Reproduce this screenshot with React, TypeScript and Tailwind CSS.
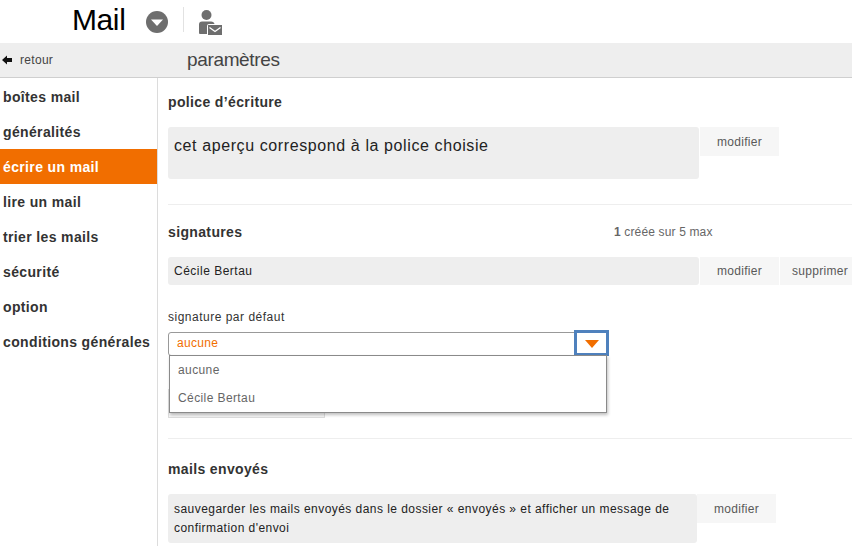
const sections = [
  'boîtes mail',
  'généralités',
  'écrire un mail',
  'lire un mail',
  'trier les mails',
  'sécurité',
  'option',
  'conditions générales',
];

function ActionButton({ label, className = '' }: { label: string; className?: string }) {
  return (
    <button className={`shrink-0 bg-[#f6f6f6] text-[12px] tracking-[0.3px] text-[#595959] ${className}`}>
      {label}
    </button>
  );
}

function Sidebar() {
  return (
    <nav className="w-[158px] shrink-0 border-r border-[#dcdcdc] pt-[1px]">
      {sections.map((section) => (
        <div
          key={section}
          className={`flex h-[35px] items-center pt-[2px] pl-[3px] text-[14px] font-bold tracking-[0.36px] whitespace-nowrap ${
            section === 'écrire un mail' ? 'bg-[#f16e00] text-white' : 'text-[#333333]'
          }`}
        >
          {section}
        </div>
      ))}
    </nav>
  );
}

function SignatureSelect() {
  return (
    <div className="relative mt-[7px] h-[24px] w-[441px]">
      <div className="flex h-[24px] items-center rounded-[3px] border border-[#999999] pb-[2px] pl-[8px] text-[12px] tracking-[0.3px] text-[#f16e00]">
        aucune
      </div>
      <div className="absolute top-[-2px] right-0 flex h-[26px] w-[35px] items-center justify-center border-[3px] border-[#4f81bd] bg-white">
        <svg width="14" height="8" viewBox="0 0 14 8" className="mt-[2px] ml-[1px]">
          <path d="M0 0h14L7 8z" fill="#f16e00" />
        </svg>
      </div>
      <div className="absolute top-[23px] left-px z-10 w-[438px] border border-[#8a8a8a] bg-white text-[12px] tracking-[0.4px] text-[#666666] shadow-[1px_2px_3px_rgba(0,0,0,0.25)]">
        <div className="flex h-[28px] items-center pl-[8px]">aucune</div>
        <div className="flex h-[28px] items-center pl-[8px]">Cécile Bertau</div>
      </div>
    </div>
  );
}

export default function App() {
  return (
    <div className="h-[546px] w-[852px] overflow-hidden bg-white font-['Liberation_Sans',Arial,sans-serif] text-[#333333]">
      <header className="flex h-[43px] items-start">
        <h1 className="mt-[2px] ml-[72px] text-[30px] leading-[36px] tracking-[-0.4px] text-black">Mail</h1>
        <svg width="22" height="22" viewBox="0 0 22 22" className="mt-[11px] ml-[21px]">
          <circle cx="11" cy="11" r="11" fill="#6e6e6e" />
          <path d="M5 8.500h12L11 15z" fill="#fff" />
        </svg>
        <div className="mt-[7px] ml-[15px] h-[25px] w-px bg-[#e2e2e2]" />
        <svg width="26" height="27" viewBox="0 0 26 27" className="mt-[9px] ml-[14px]">
          <circle cx="8.500" cy="6" r="5" fill="#6e6e6e" />
          <path d="M1 25V15.500q0-3 3-3h9q3 0 3.500 2.500H11q-2 0-2 2v8H2q-1 0-1-1z" fill="#6e6e6e" />
          <rect x="10" y="16" width="14" height="10" fill="#6e6e6e" />
          <path d="M11.500 18.500l5.500 4 5.500-4" fill="none" stroke="#fff" strokeWidth="1.300" />
        </svg>
      </header>

      <div className="flex h-[35px] items-center border-b border-[#cfcfcf] bg-[#eeeeee]">
        <div className="flex w-[187px] shrink-0 items-center">
          <svg width="10" height="10" viewBox="0 0 10 10" className="ml-[2px]">
            <path d="M0 5l5-4.500V3h5v4H5v2.500z" fill="#111111" />
          </svg>
          <span className="ml-[8px] text-[12px] tracking-[0.3px] text-[#444444]">retour</span>
        </div>
        <span className="text-[19px] tracking-[-0.35px] text-[#444444]">paramètres</span>
      </div>

      <div className="flex h-[468px]">
        <Sidebar />

        <main className="min-w-0 flex-1 pl-[10px]">
          <section className="h-[127px] border-b border-[#eeeeee] pt-[16px]">
            <h2 className="text-[14px] leading-[16px] font-bold tracking-[0.36px]">police d’écriture</h2>
            <div className="mt-[17px] flex items-start">
              <div className="h-[52px] w-[531px] shrink-0 rounded-[3px] bg-[#eeeeee] px-[6px] pt-[9px] text-[16px] leading-[20px] tracking-[0.6px] text-[#222222]">
                cet aperçu correspond à la police choisie
              </div>
              <ActionButton label="modifier" className="ml-px h-[29px] w-[79px]" />
            </div>
          </section>

          <section className="h-[234px] border-b border-[#eeeeee] pt-[18px]">
            <div className="flex h-[18px] items-center">
              <h2 className="w-[446px] text-[14px] leading-[16px] font-bold tracking-[0.36px]">signatures</h2>
              <span className="text-[12px] tracking-[0.15px] text-[#666666]">
                <b>1</b> créée sur 5 max
              </span>
            </div>
            <div className="mt-[16px] flex items-start">
              <div className="flex h-[28px] w-[531px] shrink-0 items-center rounded-[3px] bg-[#eeeeee] px-[6px] text-[12px] tracking-[0.5px] text-[#222222]">
                Cécile Bertau
              </div>
              <ActionButton label="modifier" className="ml-px h-[28px] w-[79px]" />
              <ActionButton label="supprimer" className="ml-px h-[28px] w-[80px]" />
            </div>
            <p className="mt-[24px] text-[12px] leading-[16px] tracking-[0.5px] text-[#333333]">signature par défaut</p>
            <SignatureSelect />
            <div className="mt-[33px] h-[29px] w-[157px] border border-[#dddddd] bg-[#f6f6f6]" />
          </section>

          <section className="pt-[22px]">
            <h2 className="text-[14px] leading-[16px] font-bold tracking-[0.36px]">mails envoyés</h2>
            <div className="mt-[17px] flex items-start">
              <div className="h-[49px] w-[529px] shrink-0 rounded-[3px] bg-[#eeeeee] px-[6px] pt-[6px] text-[12px] leading-[19px] tracking-[0.45px] text-[#222222]">
                sauvegarder les mails envoyés dans le dossier « envoyés » et afficher un message de confirmation d'envoi
              </div>
              <ActionButton label="modifier" className="h-[29px] w-[79px]" />
            </div>
          </section>
        </main>
      </div>
    </div>
  );
}
